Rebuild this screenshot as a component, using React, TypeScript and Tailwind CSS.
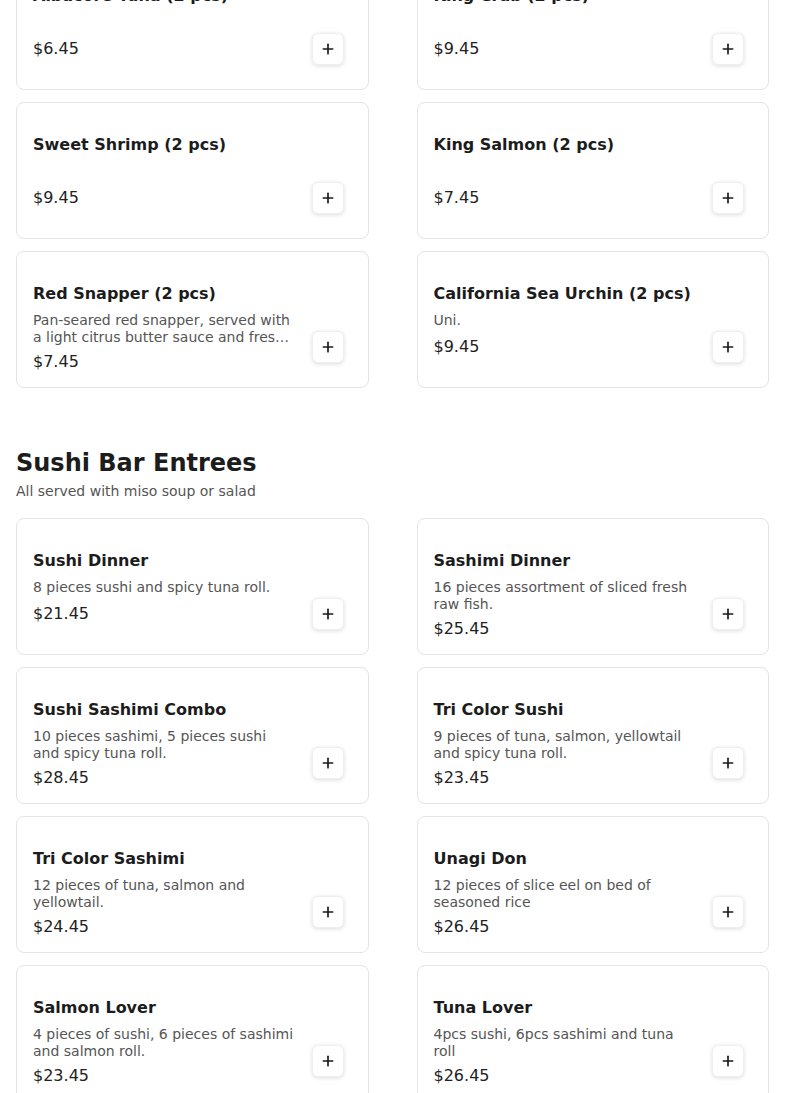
import { Plus } from "lucide-react";

interface MenuItem {
  name: string;
  description?: string;
  price: string;
}

const nigiri: MenuItem[] = [
  { name: "Albacore Tuna (2 pcs)", price: "$6.45" },
  { name: "King Crab (2 pcs)", price: "$9.45" },
  { name: "Sweet Shrimp (2 pcs)", price: "$9.45" },
  { name: "King Salmon (2 pcs)", price: "$7.45" },
  {
    name: "Red Snapper (2 pcs)",
    description:
      "Pan-seared red snapper, served with a light citrus butter sauce and fresh herbs.",
    price: "$7.45"
  },
  { name: "California Sea Urchin (2 pcs)", description: "Uni.", price: "$9.45" }
];

const entrees: MenuItem[] = [
  { name: "Sushi Dinner", description: "8 pieces sushi and spicy tuna roll.", price: "$21.45" },
  {
    name: "Sashimi Dinner",
    description: "16 pieces assortment of sliced fresh raw fish.",
    price: "$25.45"
  },
  {
    name: "Sushi Sashimi Combo",
    description: "10 pieces sashimi, 5 pieces sushi and spicy tuna roll.",
    price: "$28.45"
  },
  {
    name: "Tri Color Sushi",
    description: "9 pieces of tuna, salmon, yellowtail and spicy tuna roll.",
    price: "$23.45"
  },
  {
    name: "Tri Color Sashimi",
    description: "12 pieces of tuna, salmon and yellowtail.",
    price: "$24.45"
  },
  {
    name: "Unagi Don",
    description: "12 pieces of slice eel on bed of seasoned rice",
    price: "$26.45"
  },
  {
    name: "Salmon Lover",
    description: "4 pieces of sushi, 6 pieces of sashimi and salmon roll.",
    price: "$23.45"
  },
  { name: "Tuna Lover", description: "4pcs sushi, 6pcs sashimi and tuna roll", price: "$26.45" }
];

function ItemCard({ item }: { item: MenuItem }) {
  return (
    <div className="flex h-[137px] items-end gap-4 rounded-lg border border-[#e4e4e4] bg-white pb-6 pl-4 pr-6">
      <div className="min-w-0 flex-1 self-start pt-[30px]">
        <h3 className="text-base font-bold leading-6 text-[#1c1c1c]">{item.name}</h3>
        <p className="mt-[6px] line-clamp-2 min-h-[19px] text-sm leading-[17px] text-[#555555]">
          {item.description}
        </p>
        <p className="mt-1 text-base leading-6 text-[#222222]">{item.price}</p>
      </div>
      <button
        className="flex h-8 w-8 shrink-0 items-center justify-center rounded-md border border-[#efefef] bg-white text-[#1a1a1a] shadow-[0_1px_4px_rgba(0,0,0,0.14)]"
        aria-label={`Add ${item.name}`}
      >
        <Plus className="h-4 w-4" strokeWidth={2.5} />
      </button>
    </div>
  );
}

export default function App() {
  return (
    <div
      className="min-h-screen overflow-hidden bg-white px-4"
      style={{ fontFamily: '"DejaVu Sans", Verdana, sans-serif' }}
    >
      <div className="-mt-[47px] grid grid-cols-2 gap-x-12 gap-y-3">
        {nigiri.map(item => (
          <ItemCard key={item.name} item={item} />
        ))}
      </div>

      <section className="mt-[59px]">
        <h2 className="text-2xl font-bold leading-8 text-[#1c1c1c]">Sushi Bar Entrees</h2>
        <p className="mt-[2px] text-sm leading-5 text-[#555555]">All served with miso soup or salad</p>
        <div className="mt-[17px] grid grid-cols-2 gap-x-12 gap-y-3 pb-8">
          {entrees.map(item => (
            <ItemCard key={item.name} item={item} />
          ))}
        </div>
      </section>
    </div>
  );
}
